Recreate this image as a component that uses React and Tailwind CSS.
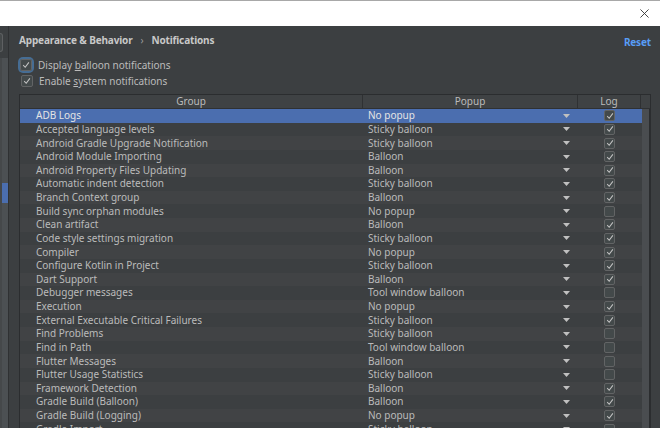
import React from 'react';

const rows = [
  ['ADB Logs', 'No popup', true],
  ['Accepted language levels', 'Sticky balloon', true],
  ['Android Gradle Upgrade Notification', 'Sticky balloon', true],
  ['Android Module Importing', 'Balloon', true],
  ['Android Property Files Updating', 'Balloon', true],
  ['Automatic indent detection', 'Sticky balloon', true],
  ['Branch Context group', 'Balloon', true],
  ['Build sync orphan modules', 'No popup', false],
  ['Clean artifact', 'Balloon', true],
  ['Code style settings migration', 'Sticky balloon', true],
  ['Compiler', 'No popup', true],
  ['Configure Kotlin in Project', 'Sticky balloon', true],
  ['Dart Support', 'Balloon', true],
  ['Debugger messages', 'Tool window balloon', false],
  ['Execution', 'No popup', true],
  ['External Executable Critical Failures', 'Sticky balloon', true],
  ['Find Problems', 'Sticky balloon', false],
  ['Find in Path', 'Tool window balloon', false],
  ['Flutter Messages', 'Balloon', false],
  ['Flutter Usage Statistics', 'Sticky balloon', false],
  ['Framework Detection', 'Balloon', true],
  ['Gradle Build (Balloon)', 'Balloon', true],
  ['Gradle Build (Logging)', 'No popup', true],
  ['Gradle Import', 'Sticky balloon', false],
];

const Check = ({ checked, size = 'w-[11px] h-[11px]' }) => (
  <span className={`${size} flex items-center justify-center rounded-[2px] border border-[#626465] bg-[#43494a]`}>
    {checked && (
      <svg viewBox="0 0 10 10" className="w-[8px] h-[8px]">
        <path d="M1.5 5.2 L4 7.8 L8.6 1.8" fill="none" stroke="#c4c4c4" strokeWidth="1.3" />
      </svg>
    )}
  </span>
);

export default function App() {
  return (
    <div className="w-[660px] h-[428px] overflow-hidden flex flex-col bg-[#3c3f41] text-[#bbbbbb]" style={{ fontFamily: '"Noto Sans", "Open Sans", sans-serif' }}>
      {/* title bar */}
      <div className="h-[26px] shrink-0 bg-white border-t border-[#a8a8a8] flex items-center justify-end pr-[11px]">
        <svg viewBox="0 0 10 10" className="w-[9px] h-[9px]">
          <path d="M0.5 0.5 L9.5 9.5 M9.5 0.5 L0.5 9.5" stroke="#333" strokeWidth="1" />
        </svg>
      </div>

      <div className="flex flex-1 min-h-0">
        {/* left tree edge */}
        <div className="w-[8px] shrink-0 flex flex-col">
          <div className="h-[32px] shrink-0 pt-[7px]">
            <div className="w-[3px] h-[19px] rounded-r-[3px] border border-l-0 border-[#5e6062] bg-[#45494a]" />
          </div>
          <div className="flex-1 flex">
            <div className="w-[2px] bg-[#45484a]" />
            <div className="flex-1 bg-[#4c5053] flex flex-col">
              <div className="h-[125px] shrink-0" />
              <div className="h-[20px] shrink-0 bg-[#4b6eaf]" />
            </div>
          </div>
        </div>
        <div className="w-[1px] shrink-0 bg-[#2f3133]" />

        {/* content */}
        <div className="flex-1 min-h-0 flex flex-col pl-[10px] pr-[9px]">
          <div className="h-[28px] shrink-0 flex items-center justify-between text-[10px] font-bold tracking-[-0.15px]">
            <div className="flex items-center text-[#c8c8c8]">
              <span>Appearance &amp; Behavior</span>
              <span className="mx-[8px] text-[#9a9a9a] font-normal">›</span>
              <span>Notifications</span>
            </div>
            <span className="text-[#589df6] translate-y-[2px]">Reset</span>
          </div>

          <div className="mt-[3px] shrink-0 flex flex-col text-[10px]">
            <label className="h-[16px] flex items-center gap-[6px] pl-[1px]">
              <span className="rounded-[3px] ring-2 ring-[#466d94]">
                <Check checked size="w-[12px] h-[12px]" />
              </span>
              <span>Display <span className="underline">b</span>alloon notifications</span>
            </label>
            <label className="h-[16px] flex items-center gap-[6px] pl-[2px]">
              <Check checked size="w-[12px] h-[12px]" />
              <span>Enable <span className="underline">s</span>ystem notifications</span>
            </label>
          </div>

          {/* table */}
          <div className="mt-[5px] flex-1 min-h-0 overflow-hidden border border-b-0 border-[#2b2d2f] flex flex-col text-[10px]">
            <div className="h-[14px] shrink-0 flex bg-[#3f4244] border-b border-[#2f3133]">
              <div className="w-[343px] text-center leading-[13px] border-r border-[#2f3133]">Group</div>
              <div className="w-[215px] text-center leading-[13px] border-r border-[#2f3133]">Popup</div>
              <div className="w-[63px] text-center leading-[13px] border-r border-[#2f3133]">Log</div>
              <div className="flex-1" />
            </div>
            <div className="flex flex-1 min-h-0">
              <div className="w-[622px] flex flex-col">
                {rows.map(([g, p, c], i) => (
                  <div
                    key={g}
                    className={`h-[13.64px] shrink-0 flex items-center ${i === 0 ? 'bg-[#4b6eaf] text-[#e4e4e4]' : i % 2 === 0 ? 'bg-[#414345]' : 'bg-[#3c3f41]'}`}
                  >
                    <div className="w-[343px] pl-[16px] whitespace-nowrap">{g}</div>
                    <div className="w-[215px] pl-[5px] pr-[8px] flex items-center justify-between whitespace-nowrap">
                      <span>{p}</span>
                      <svg viewBox="0 0 7 4" className="w-[7px] h-[4px]">
                        <path d="M0 0 H7 L3.5 4 Z" fill="#c0c0c0" />
                      </svg>
                    </div>
                    <div className="w-[63px] flex justify-center">
                      <Check checked={c} />
                    </div>
                  </div>
                ))}
              </div>
              <div className="flex-1 bg-[#4a4d50] border-r border-[#2b2d2f]" />
            </div>
          </div>
        </div>
      </div>
    </div>
  );
}
